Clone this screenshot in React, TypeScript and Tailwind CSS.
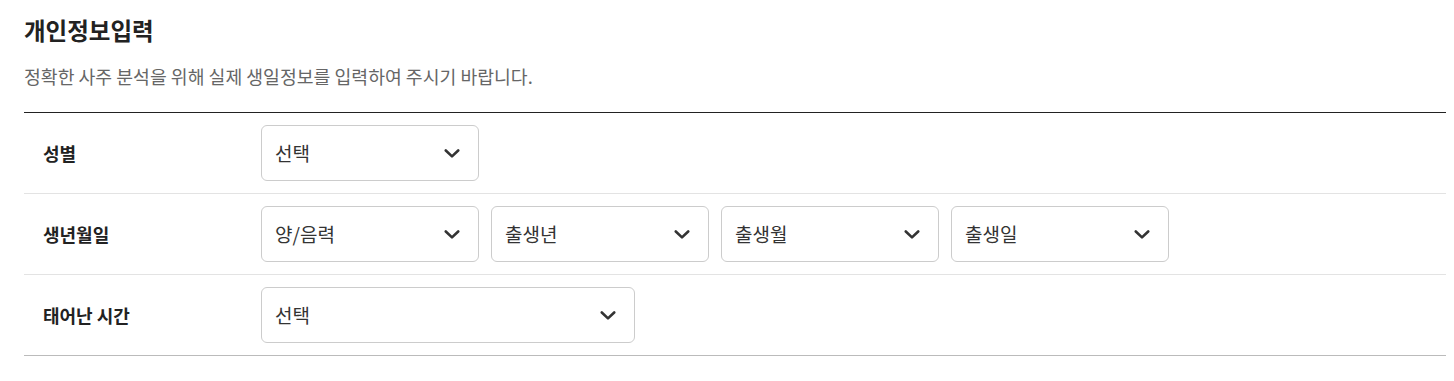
import React from "react";

const font = { fontFamily: '"Noto Sans CJK KR", "Noto Sans", sans-serif' };

function Chevron() {
  return (
    <svg width="16" height="9" viewBox="0 0 16 9" fill="none" className="shrink-0">
      <polyline points="1.8,1.5 8,7.4 14.2,1.5" stroke="#333" strokeWidth="2.6" strokeLinecap="round" strokeLinejoin="round" />
    </svg>
  );
}

function Select({ label, w }: { label: string; w: string }) {
  return (
    <div className={`${w} h-[56px] border border-[#cccccc] rounded-[6px] bg-white flex items-center justify-between pl-[13px] pr-[18px]`}>
      <span className="text-[19px] text-[#333] leading-[24px]">{label}</span>
      <Chevron />
    </div>
  );
}

function Row({ title, children, last }: { title: string; children: React.ReactNode; last?: boolean }) {
  return (
    <div className={`flex items-center h-[81px] border-b ${last ? "border-[#bbbbbb]" : "border-[#e3e3e3]"}`}>
      <div className="w-[237px] shrink-0 pl-[19px] text-[18px] font-bold text-[#222] leading-[24px]">{title}</div>
      <div className="flex items-center gap-[12px]">{children}</div>
    </div>
  );
}

export default function App() {
  return (
    <div className="bg-white min-h-[381px] pl-[24px] pr-[8px] pt-[14px]" style={font}>
      <h2 className="text-[23.5px] font-bold text-[#222] leading-[32px]">개인정보입력</h2>
      <p className="mt-[18px] text-[18.3px] text-[#666] leading-[24px]">
        정확한 사주 분석을 위해 실제 생일정보를 입력하여 주시기 바랍니다.
      </p>
      <div className="mt-[24px] border-t border-[#222]">
        <Row title="성별">
          <Select label="선택" w="w-[218px]" />
        </Row>
        <Row title="생년월일">
          <Select label="양/음력" w="w-[218px]" />
          <Select label="출생년" w="w-[218px]" />
          <Select label="출생월" w="w-[218px]" />
          <Select label="출생일" w="w-[218px]" />
        </Row>
        <Row title="태어난 시간" last>
          <Select label="선택" w="w-[374px]" />
        </Row>
      </div>
    </div>
  );
}
